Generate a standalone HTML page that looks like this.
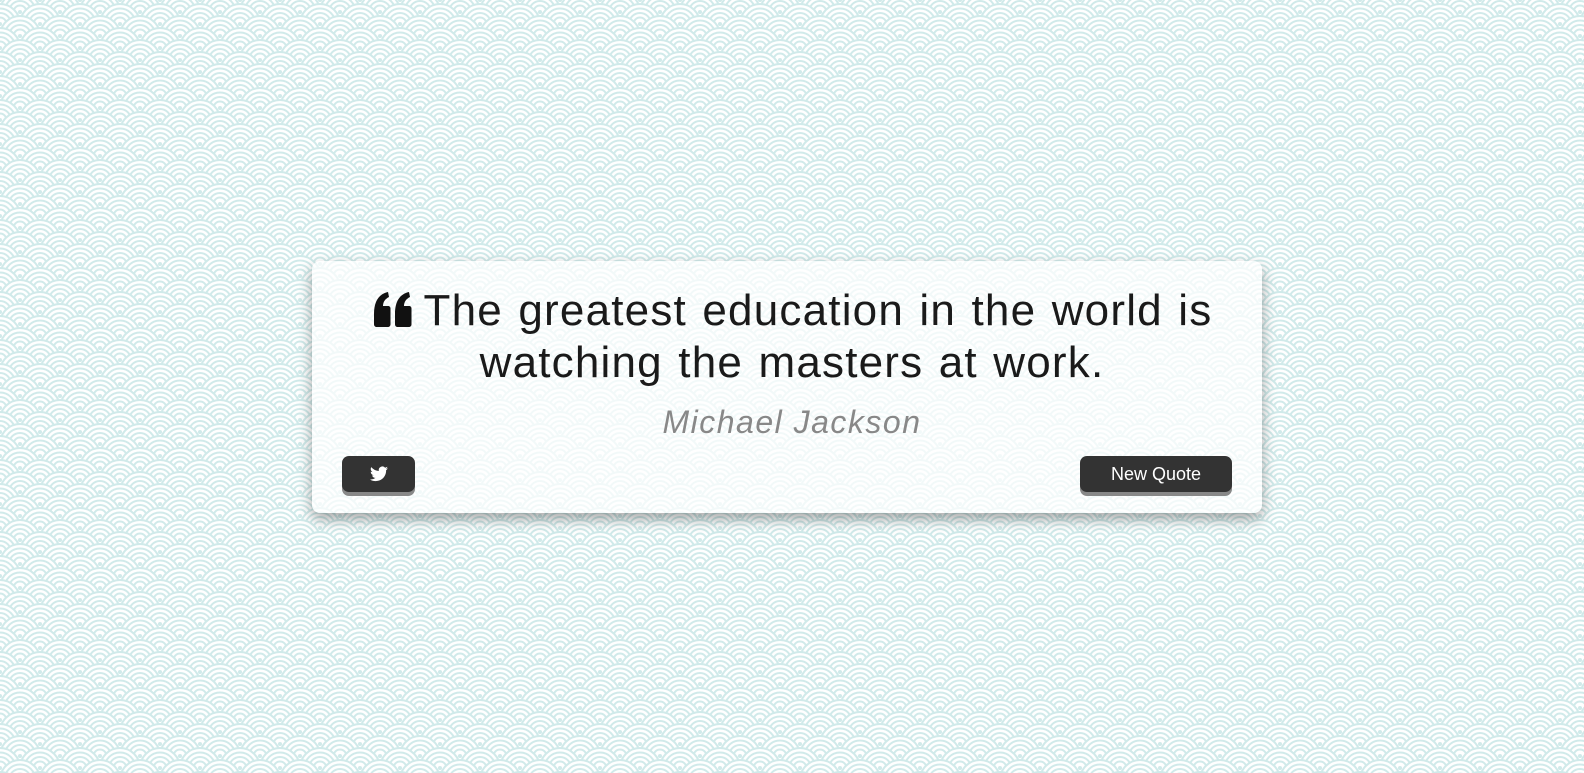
<!DOCTYPE html>
<html><head><meta charset="utf-8"><style>
html,body{margin:0;height:100%;}
body{width:1584px;height:773px;position:relative;overflow:hidden;background:#fff;font-family:"Liberation Sans",sans-serif;}
svg.bg{position:absolute;left:0;top:0;}
.card{position:absolute;left:312px;top:261px;width:950px;height:252px;background:rgba(255,255,255,0.72);border-radius:8px;box-shadow:0 6px 14px rgba(0,0,0,0.35);}
.q{position:absolute;left:0;right:0;top:285px;text-align:center;font-size:44px;line-height:52px;color:#1a1a1a;letter-spacing:1.2px;word-spacing:2px;}
.a{position:absolute;left:0;right:0;top:404px;text-align:center;font-size:32px;font-style:italic;color:#888;letter-spacing:1.5px;}
.btn{position:absolute;top:456px;height:36px;background:#333;border-radius:7px;box-shadow:0 4px 0 #888;color:#fff;font-size:18px;line-height:36px;text-align:center;}
</style></head><body>
<svg class="bg" width="1584" height="773"><defs>
<g id="s"><circle r="20" fill="#fff" stroke="#d0eaea" stroke-width="2"/><circle r="15.5" fill="none" stroke="#d0eaea" stroke-width="2"/><circle r="11" fill="none" stroke="#d0eaea" stroke-width="2"/><circle r="6.5" fill="none" stroke="#d0eaea" stroke-width="2"/><circle r="2" fill="#d0eaea"/></g>
<pattern id="p" width="40" height="24" patternUnits="userSpaceOnUse">
<use href="#s" x="20" y="-12"/><use href="#s" x="0" y="0"/><use href="#s" x="40" y="0"/><use href="#s" x="20" y="12"/><use href="#s" x="0" y="24"/><use href="#s" x="40" y="24"/><use href="#s" x="20" y="36"/>
</pattern></defs><rect width="1584" height="773" fill="url(#p)"/></svg>
<div class="card"></div>
<div class="q"><svg width="42" height="36" viewBox="0 0 42 36" style="vertical-align:-3px;margin-right:10px"><path fill="#111" d="M2 22C2 9 7 2 16 0l1 5c-4 2-6 5-6 9h5c1.5 0 2.5 1 2.5 2.5V32c0 2-1 3-3 3H5c-2 0-3-1-3-3zM23 22C23 9 28 2 37 0l1 5c-4 2-6 5-6 9h5c1.5 0 2.5 1 2.5 2.5V32c0 2-1 3-3 3H26c-2 0-3-1-3-3z"/></svg>The greatest education in the world is<br>watching the masters at work.</div>
<div class="a">Michael Jackson</div>
<div class="btn" style="left:342px;width:73px"><svg width="18" height="16" viewBox="0 0 24 20" style="vertical-align:-2px"><path fill="#fff" d="M24 2.4a10 10 0 0 1-2.8.8A5 5 0 0 0 23.3.4a10 10 0 0 1-3.1 1.2A4.9 4.9 0 0 0 11.8 6 14 14 0 0 1 1.700.9a4.9 4.9 0 0 0 1.5 6.6A4.9 4.9 0 0 1 1 6.9a4.9 4.9 0 0 0 3.9 4.8 5 5 0 0 1-2.2.1 4.9 4.9 0 0 0 4.6 3.4A9.9 9.9 0 0 1 0 17.3 14 14 0 0 0 7.5 19.5c9.1 0 14-7.5 14-14v-.6A10 10 0 0 0 24 2.4z"/></svg></div>
<div class="btn" style="left:1080px;width:152px">New Quote</div>
</body></html>
